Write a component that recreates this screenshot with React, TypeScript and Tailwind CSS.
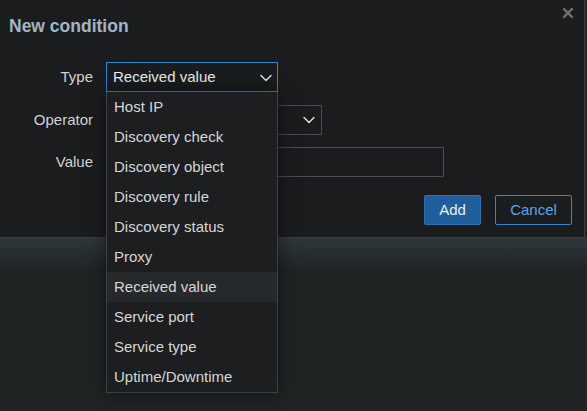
const options = [
  'Host IP',
  'Discovery check',
  'Discovery object',
  'Discovery rule',
  'Discovery status',
  'Proxy',
  'Received value',
  'Service port',
  'Service type',
  'Uptime/Downtime',
];

function Chevron() {
  return (
    <svg width="12" height="8" viewBox="0 0 12 8" fill="none" className="shrink-0">
      <path d="M1 1.5l5 5 5-5" stroke="#e6e6e6" strokeWidth="1.4" strokeLinecap="round" strokeLinejoin="round" />
    </svg>
  );
}

export default function App() {
  const selected = 'Received value';

  return (
    <div
      className="relative w-[587px] h-[411px] overflow-hidden bg-[#202425] text-[15px] text-[#d2d2d2]"
      style={{ fontFamily: '"Liberation Sans", Arial, sans-serif' }}
    >
      {/* dialog */}
      <div className="relative w-[585px] h-[238px] bg-[#1b1c1e] border-r border-b border-[#3a3e41]">
        <button className="absolute right-[11px] top-[8px] w-[10px] h-[10px]">
          <svg width="10" height="10" viewBox="0 0 10 10">
            <path d="M1 1l8 8M9 1l-8 8" stroke="#6f6f6f" strokeWidth="2.4" strokeLinecap="square" />
          </svg>
        </button>

        <h1 className="pl-[9px] pt-[15px] leading-[22px] text-[17.5px] font-bold text-[#a0b6c7]">New condition</h1>

        <div className="mt-[25px] flex flex-col gap-[12px]">
          <div className="flex items-center h-[30px]">
            <label className="w-[93px] text-right pt-[1px]">Type</label>
            <div className="ml-[13px] w-[172px] h-[30px] border border-[#3584cf] flex items-center justify-between pl-[6px] pr-[5px] pt-[1px] text-[#ececec]">
              <span>{selected}</span>
              <Chevron />
            </div>
          </div>
          <div className="flex items-center h-[30px] mt-[1px]">
            <label className="w-[93px] text-right">Operator</label>
            <div className="ml-[13px] w-[216px] h-[30px] border border-[#4a4d50] flex items-center justify-end pr-[6px]">
              <Chevron />
            </div>
          </div>
          <div className="flex items-center h-[30px]">
            <label className="w-[93px] text-right">Value</label>
            <div className="ml-[13px] w-[338px] h-[30px] border border-[#4a4d50]" />
          </div>
        </div>

        <div className="mt-[18px] flex justify-end gap-[14px] pr-[12px]">
          <button className="w-[57px] h-[30px] rounded-[2px] bg-[#1e5e9a] border border-[#2a72b5] text-[#e9eef4]">Add</button>
          <button className="w-[77px] h-[30px] rounded-[2px] border border-[#2f86d6] text-[#55a6e6]">Cancel</button>
        </div>
      </div>

      {/* glow below dialog */}
      <div className="w-[587px] h-[32px] bg-gradient-to-b from-[#30373a] to-[#202425]" />

      {/* open dropdown list */}
      <ul className="absolute left-[106px] top-[92px] w-[172px] bg-[#1c1e20] border-x border-b border-[#3c4043] shadow-[0_0_18px_rgba(0,0,0,0.55)]">
        {options.map((o) => (
          <li
            key={o}
            className={`h-[30px] flex items-center pl-[7px] pt-[1px] text-[#d6d6d6] ${o === selected ? 'bg-[#26292b]' : ''}`}
          >
            {o}
          </li>
        ))}
      </ul>
    </div>
  );
}
